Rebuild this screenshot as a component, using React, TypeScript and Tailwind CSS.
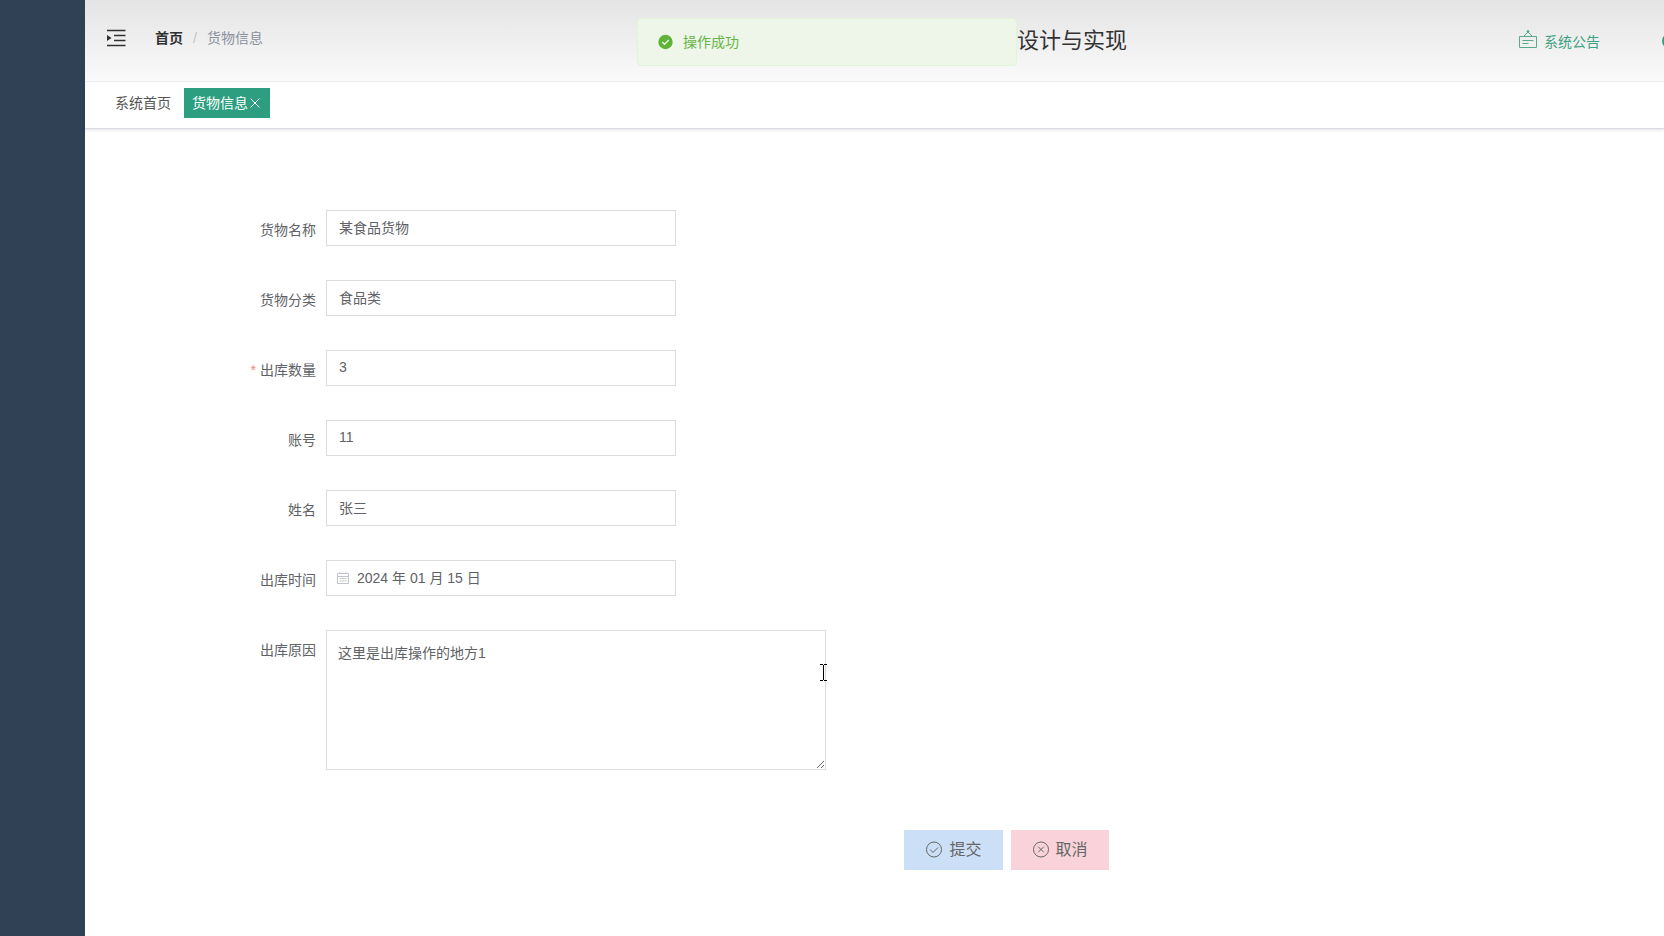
import React, { ReactNode } from "react";

type FormItemProps = {
  id: string;
  label: string;
  required?: boolean;
  children: ReactNode;
};

const inputClass =
  "h-9 w-[350px] border border-[#dcdcdc] bg-white px-3 pb-0.5 text-sm text-[#606266] outline-none";

const FormItem = ({ id, label, required, children }: FormItemProps) => {
  return (
    <div className="flex items-start">
      <label
        htmlFor={id}
        className="w-[120px] shrink-0 pr-2.5 text-right text-sm leading-10 text-[#606266]"
      >
        {required && <span className="mr-1 text-[#ee8a85]">*</span>}
        {label}
      </label>
      {children}
    </div>
  );
};

const FoldIcon = () => (
  <svg width="20" height="18" viewBox="0 0 20 18" fill="none" aria-hidden="true">
    <path d="M1 1.5h18.5M8 6.5h11.5M8 11.5h11.5M1 16.5h18.5" stroke="#303133" strokeWidth="1.3" />
    <path d="M1 6l4.5 3-4.5 3z" fill="#303133" />
  </svg>
);

const NoticeIcon = () => (
  <svg width="18" height="18" viewBox="0 0 18 18" fill="none" stroke="#5aa98b" aria-hidden="true">
    <path d="M.5 6.5h17v11H.5zM3.5 10.5h11M3.5 13.5h6M4.5 6.5L9 2l4.5 4.5" />
    <circle cx="9" cy="1.5" r="1" fill="#5aa98b" />
  </svg>
);

const CalendarIcon = () => (
  <svg width="14" height="14" viewBox="0 0 14 14" fill="none" stroke="#c0c4cc" aria-hidden="true">
    <path d="M1.5 2.5h11v10h-11zM1.5 5.5h11M4 1v2M10 1v2" />
    <path d="M3.5 7.5h2M6 7.5h2M8.5 7.5h2M3.5 10h2M6 10h2M8.5 10h2" />
  </svg>
);

const Toast = () => (
  <div
    role="status"
    className="absolute left-[calc(50%-5px)] top-[18px] z-10 flex h-12 w-[380px] -translate-x-1/2 items-center gap-2.5 rounded border border-[#e1f3d8] bg-[#edf6e8] px-5 text-sm text-[#67b347]"
  >
    <svg width="15" height="16" viewBox="0 0 15 16" aria-hidden="true">
      <circle cx="7.5" cy="8" r="7.2" fill="#5fb336" />
      <path d="M4.2 8l2.3 2.3 4.3-4.3" fill="none" stroke="#edf6e8" strokeWidth="1.3" />
    </svg>
    <span>操作成功</span>
  </div>
);

const Header = () => {
  return (
    <header className="flex h-[82px] items-center border-b border-[#f2f2f2] bg-linear-to-b from-[#e4e4e4] to-[#fafafa]">
      <div className="flex flex-1 items-center pb-1.5 pl-[21px]">
        <button type="button" aria-label="折叠菜单">
          <FoldIcon />
        </button>
        <nav className="ml-[29px] flex items-center gap-2.5 text-sm">
          <a href="#" className="font-bold text-[#303133]">
            首页
          </a>
          <span className="text-[#c0c4cc]">/</span>
          <span className="text-[#8a919c]">货物信息</span>
        </nav>
      </div>
      <h1 className="text-[22px] text-[#333]">设计与实现</h1>
      <div className="flex w-[537px] shrink-0 items-center overflow-hidden pl-[392px]">
        <a href="#" className="flex shrink-0 items-start gap-[7px] text-sm text-[#3fa283]">
          <NoticeIcon />
          <span className="pt-0.5">系统公告</span>
        </a>
        <span className="ml-[62px] size-4 shrink-0 rounded-full border-2 border-[#2f9f82]" />
      </div>
    </header>
  );
};

const Tabs = () => {
  return (
    <nav className="flex h-[47px] items-start border-b border-[#d8dce5] bg-white px-[22px] pt-1.5 text-sm shadow-[0_1px_3px_rgba(0,0,0,0.12)]">
      <a href="#" className="px-2 leading-[30px] text-[#555]">
        系统首页
      </a>
      <a
        href="#"
        className="ml-[5px] flex items-center bg-[#2d9f80] px-2 leading-[30px] text-white"
      >
        货物信息
        <svg width="14" height="14" viewBox="0 0 14 14" stroke="#fff" aria-hidden="true">
          <path d="M2.5 2.5l9 9M11.5 2.5l-9 9" />
        </svg>
      </a>
    </nav>
  );
};

const CargoForm = () => {
  const fields = [
    { id: "name", label: "货物名称", value: "某食品货物" },
    { id: "type", label: "货物分类", value: "食品类" },
    { id: "count", label: "出库数量", value: "3", required: true },
    { id: "account", label: "账号", value: "11" },
    { id: "person", label: "姓名", value: "张三" },
  ];

  return (
    <form className="px-[121px] pt-[81px]" onSubmit={(e) => e.preventDefault()}>
      <div className="flex flex-col gap-[30px]">
        {fields.map((item) => (
          <FormItem key={item.id} id={item.id} label={item.label} required={item.required}>
            <input id={item.id} defaultValue={item.value} className={inputClass} />
          </FormItem>
        ))}
        <FormItem id="date" label="出库时间">
          <div className="relative">
            <span className="absolute left-2.5 top-[11px]">
              <CalendarIcon />
            </span>
            <input
              id="date"
              defaultValue="2024 年 01 月 15 日"
              className="h-9 w-[350px] border border-[#dcdcdc] bg-white pb-0.5 pl-[30px] pr-3 text-sm text-[#606266] outline-none"
            />
          </div>
        </FormItem>
        <FormItem id="reason" label="出库原因">
          <div className="relative">
            <textarea
              id="reason"
              defaultValue="这里是出库操作的地方1"
              className="block h-[140px] w-[500px] border border-[#dcdcdc] bg-white px-[11px] py-3 text-sm leading-[21px] text-[#606266] outline-none"
            />
            {/* text cursor */}
            <svg
              className="absolute right-[-1px] top-[34px]"
              width="7"
              height="17"
              viewBox="0 0 7 17"
              fill="none"
              stroke="#000"
              aria-hidden="true"
            >
              <path d="M0 .5h3M4 .5h3M0 16.5h3M4 16.5h3M3.5 1v15" />
            </svg>
          </div>
        </FormItem>
      </div>
      <div className="mt-[60px] flex justify-center gap-2 pl-[264px]">
        <button
          type="submit"
          className="flex h-10 items-center gap-1.5 bg-[#cbdff6] px-[21px] text-[#666]"
        >
          <svg width="18" height="18" viewBox="0 0 18 18" fill="none" stroke="#666" aria-hidden="true">
            <circle cx="9" cy="8.5" r="7.5" />
            <path d="M5 8.5l3 3 5-5" />
          </svg>
          提交
        </button>
        <button
          type="button"
          className="flex h-10 items-center gap-1.5 bg-[#f9d2da] px-[21px] text-[#666]"
        >
          <svg width="18" height="18" viewBox="0 0 18 18" fill="none" stroke="#666" aria-hidden="true">
            <circle cx="9" cy="8.5" r="7.5" />
            <path d="M6.2 5.7l5.6 5.6M11.8 5.7l-5.6 5.6" />
          </svg>
          取消
        </button>
      </div>
    </form>
  );
};

const App = () => {
  return (
    <div className="relative flex min-h-screen overflow-hidden bg-white font-['Liberation_Sans','Noto_Sans_CJK_SC',sans-serif]">
      <aside className="w-[85px] shrink-0 bg-[#304156]" />
      <div className="min-w-0 flex-1">
        <Header />
        <Tabs />
        <main>
          <CargoForm />
        </main>
      </div>
      <Toast />
    </div>
  );
};

export default App;
